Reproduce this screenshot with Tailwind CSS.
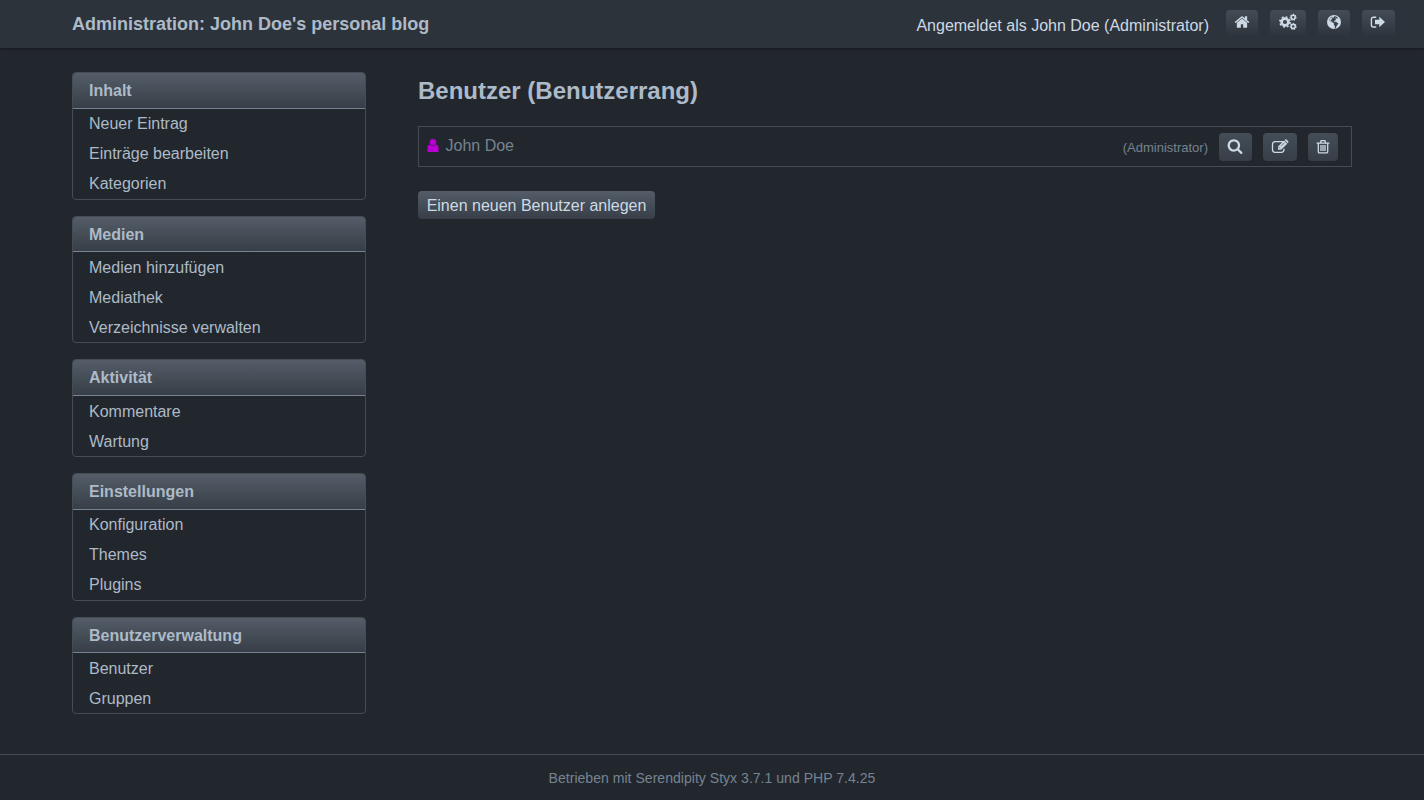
<!DOCTYPE html>
<html lang="de">
<head>
<meta charset="utf-8">
<title>Benutzer (Benutzerrang)</title>
<script src="https://cdn.jsdelivr.net/npm/@tailwindcss/browser@4"></script>
</head>
<body class="flex h-[800px] flex-col overflow-hidden bg-[#22272e] font-['Liberation_Sans',Arial,sans-serif] text-base text-[#adbac7]">
<header class="relative flex h-12 shrink-0 items-start justify-between bg-[#2d333b] pl-[72px] pr-[29px] shadow-[0_1px_3px_#15191e]">
  <h1 class="pt-[10px] text-lg leading-7 font-bold">Administration: John Doe's personal blog</h1>
  <nav class="flex items-start pt-[10px]">
    <span class="mr-[17px] pt-1 leading-6 text-[#cdd9e5]">Angemeldet als John Doe (Administrator)</span>
    <a class="mr-3 flex h-[27px] w-8 items-center justify-center rounded-sm bg-linear-to-b from-[#444c56] to-[#2d333b] text-[#cdd9e5]"><svg class="mr-px mb-[3px] h-4 w-4" viewBox="0 0 1792 1792" fill="currentColor"><path d="M1472 992v480q0 26-19 45t-45 19h-384v-384h-256v384h-384q-26 0-45-19t-19-45v-480l576-480 575 474q1 2 1 6zm223-69l-62 74q-8 9-21 11h-3q-13 0-21-7l-692-577-692 577q-12 8-24 7-13-2-21-11l-62-74q-8-10-7-23.5t11-21.5l719-599q32-26 76-26t76 26l244 204v-195q0-14 9-23t23-9h192q14 0 23 9t9 23v408l219 182q10 8 11 21.5t-7 23.5z"/></svg></a>
    <a class="mr-3 flex h-[27px] w-9 items-center justify-center rounded-sm bg-linear-to-b from-[#444c56] to-[#2d333b] text-[#cdd9e5]"><svg class="mb-[3px] h-[18px] w-[18px]" viewBox="0 0 18 18" fill="none" stroke="currentColor"><circle cx="6" cy="9" r="3.400" stroke-width="2.700"/><circle cx="6" cy="9" r="5" stroke-width="1.800" stroke-dasharray="1.96 1.96"/><circle cx="14.200" cy="4.300" r="2" stroke-width="1.600"/><circle cx="14.200" cy="4.300" r="2.900" stroke-width="1.100" stroke-dasharray="1.3 1.3"/><circle cx="14.200" cy="13.400" r="2" stroke-width="1.600"/><circle cx="14.200" cy="13.400" r="2.900" stroke-width="1.100" stroke-dasharray="1.3 1.3"/></svg></a>
    <a class="mr-3 flex h-[27px] w-8 items-center justify-center rounded-sm bg-linear-to-b from-[#444c56] to-[#2d333b] text-[#cdd9e5]"><svg class="mr-px mb-[3px] h-[14px] w-[14px]" viewBox="0 0 14 14"><circle cx="7" cy="7" r="7" fill="currentColor"/><path d="M7.4 1.2 9 1.5l1.800 1-.4 1-1.200.1-.7 1.600-1.300.7.2 1 1.700-.1 1 1 1.200.5-.6 1.400-1.100 1-.6 2.300-1.400.7.4-2.400-1.100-1.200.1-1.600-1.100-.9-1.800-.5-1.600-1.800.2-1.600 1.200-1.600 1.200-.3.2 1 1.100-.1z" fill="#3a424c"/><path d="m3.300 2.600 1.600-.2.4 1-1 1-.4 1.500 1.300.5.4.7-1.200-.3L3 5.300zM8.600 2.600l1 .3-.6.7-.7-.1z" fill="currentColor"/></svg></a>
    <a class="flex h-[27px] w-[33px] items-center justify-center rounded-sm bg-linear-to-b from-[#444c56] to-[#2d333b] text-[#cdd9e5]"><svg class="mr-px mb-[3px] h-4 w-4" viewBox="0 0 16 16" fill="none"><path d="M6.200 3.200H3.400a2 2 0 0 0-2 2v5.800a2 2 0 0 0 2 2h2.800" stroke="currentColor" stroke-width="1.400"/><path d="M5 5.800h4.300V2.700L15 8l-5.700 5.300v-3.100H5z" fill="currentColor"/></svg></a>
  </nav>
</header>
<div class="flex grow">
  <nav class="ml-[72px] mt-6 flex w-[294px] shrink-0 flex-col gap-4">
    <section class="overflow-hidden rounded-[4px] border border-[#444c56]">
      <h2 class="h-9 border-b border-[#768390] bg-linear-to-b from-[#545d68] to-[#373e47] pl-4 leading-9 font-bold">Inhalt</h2>
      <ul class="pl-4 leading-[30px]"><li>Neuer Eintrag</li><li>Einträge bearbeiten</li><li>Kategorien</li></ul>
    </section>
    <section class="overflow-hidden rounded-[4px] border border-[#444c56]">
      <h2 class="h-[35px] border-b border-[#768390] bg-linear-to-b from-[#545d68] to-[#373e47] pl-4 leading-9 font-bold">Medien</h2>
      <ul class="-mb-px pt-px pl-4 leading-[30px]"><li>Medien hinzufügen</li><li>Mediathek</li><li>Verzeichnisse verwalten</li></ul>
    </section>
    <section class="overflow-hidden rounded-[4px] border border-[#444c56]">
      <h2 class="h-9 border-b border-[#768390] bg-linear-to-b from-[#545d68] to-[#373e47] pl-4 leading-9 font-bold">Aktivität</h2>
      <ul class="-mb-px pt-px pl-4 leading-[30px]"><li>Kommentare</li><li>Wartung</li></ul>
    </section>
    <section class="overflow-hidden rounded-[4px] border border-[#444c56]">
      <h2 class="h-9 border-b border-[#768390] bg-linear-to-b from-[#545d68] to-[#373e47] pl-4 leading-9 font-bold">Einstellungen</h2>
      <ul class="pl-4 leading-[30px]"><li>Konfiguration</li><li>Themes</li><li>Plugins</li></ul>
    </section>
    <section class="overflow-hidden rounded-[4px] border border-[#444c56]">
      <h2 class="h-[35px] border-b border-[#768390] bg-linear-to-b from-[#545d68] to-[#373e47] pl-4 leading-9 font-bold">Benutzerverwaltung</h2>
      <ul class="-mb-px pt-px pl-4 leading-[30px]"><li>Benutzer</li><li>Gruppen</li></ul>
    </section>
  </nav>
  <main class="ml-[52px] mr-[72px] grow pt-[25px]">
    <h2 class="text-2xl leading-9 font-bold">Benutzer (Benutzerrang)</h2>
    <div class="mt-[17px] flex h-[41px] items-start border border-[#444c56] pl-2 pr-[13px] text-[#768390]">
      <svg class="mt-3 h-[13px] w-3" viewBox="0 0 12 13" fill="#b800d2"><ellipse cx="6" cy="3.300" rx="3.300" ry="3.300"/><path d="M2.600 5.800C1 5.800.4 7.500.4 9.500V12q0 1 1 1h9.200q1 0 1-1V9.500C11.600 7.500 11 5.800 9.400 5.800 7.600 7.300 4.400 7.300 2.600 5.800z"/></svg>
      <h3 class="ml-[6.500px] mt-[7px] leading-6">John Doe</h3>
      <span class="ml-auto mr-[11px] mt-[11px] text-[13px] leading-5">(Administrator)</span>
      <a class="mr-[11px] mt-1.5 flex h-7 w-[33px] items-center justify-center rounded-sm bg-linear-to-b from-[#444c56] to-[#373e47] text-[#cdd9e5]"><svg class="mr-px mb-0.5 h-4 w-4" viewBox="0 0 1792 1792" fill="currentColor"><path d="M1216 832q0-185-131.5-316.5t-316.5-131.5-316.5 131.5-131.5 316.5 131.5 316.5 316.500 131.500 316.500-131.500 131.500-316.500zm512 832q0 52-38 90t-90 38q-54 0-90-38l-343-342q-179 124-399 124-143 0-273.500-55.500t-225-150-150-225-55.500-273.500 55.500-273.500 150-225 225-150 273.500-55.500 273.500 55.500 225 150 150 225 55.500 273.500q0 220-124 399l343 343q37 37 37 90z"/></svg></a>
      <a class="mr-[11px] mt-1.5 flex h-7 w-[34px] items-center justify-center rounded-sm bg-linear-to-b from-[#444c56] to-[#373e47] text-[#cdd9e5]"><svg class="mr-px h-4 w-[18px]" viewBox="0 0 18 16" fill="none"><path d="M12.500 2.700H4a2.500 2.500 0 0 0-2.500 2.500v5.600A2.500 2.500 0 0 0 4 13.300h6.500a2.500 2.500 0 0 0 2.500-2.500V9.700" stroke="currentColor" stroke-width="1.300"/><path d="M7 7.500 13 1.500l3.200 3.200-6 6H7z" fill="currentColor"/><path d="m13.600.9.500-.4q.8-.5 1.400.1l1.700 1.700q.6.7 0 1.400l-.5.500z" fill="currentColor"/><path d="m8 8.200 1.200 1.300M10 7.300l3.500-3.500" stroke="#3e4650" stroke-width=".7"/></svg></a>
      <a class="mt-1.5 flex h-7 w-[30px] items-center justify-center rounded-sm bg-linear-to-b from-[#444c56] to-[#373e47] text-[#cdd9e5]"><svg class="mb-px h-4 w-[14px]" viewBox="0 0 14 16" fill="none" stroke="currentColor" stroke-width="1.300"><path d="M.6 4.100h12.800M4.300 4l.8-2.300h3.800L9.700 4M2.300 4.100v8.600q0 1.200 1 1.200h7.400q1 0 1-1.200V4.100M5 6v6M7 6v6M9 6v6"/></svg></a>
    </div>
    <a class="mt-6 inline-flex h-7 w-[237px] items-center justify-center rounded-sm bg-linear-to-b from-[#545d68] to-[#373e47] pt-0.5 text-[#cdd9e5]">Einen neuen Benutzer anlegen</a>
  </main>
</div>
<footer class="h-[46px] shrink-0 border-t border-[#444c56] pt-[13px] text-center text-[14.08px] leading-5 text-[#768390]">Betrieben mit Serendipity Styx 3.7.1 und PHP 7.4.25</footer>
</body>
</html>
